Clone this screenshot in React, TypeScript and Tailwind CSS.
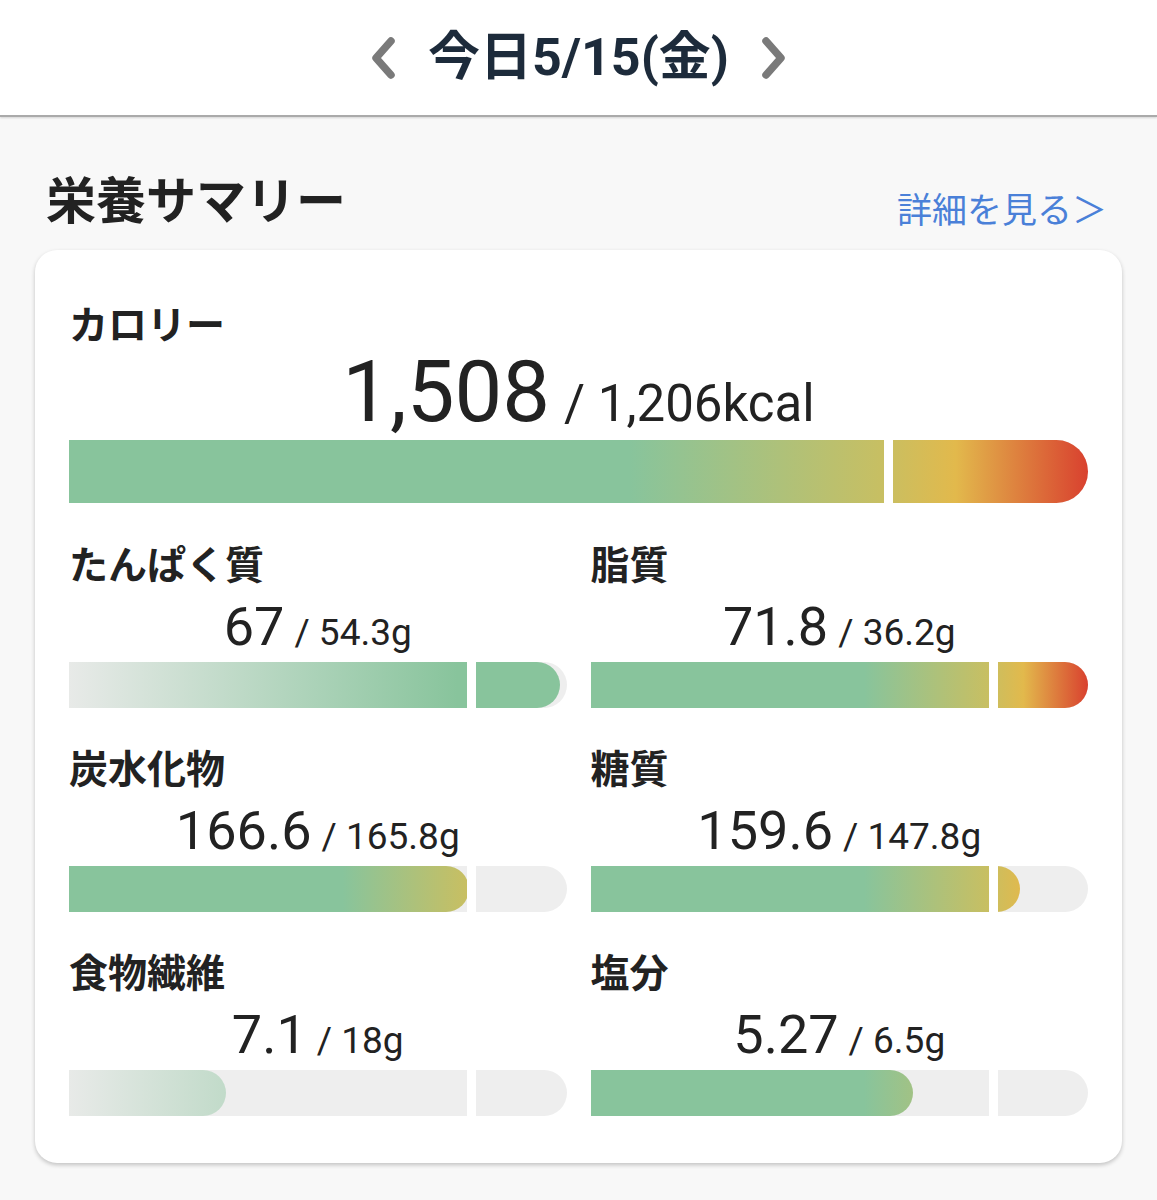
import React from "react";

const BAD =
  "linear-gradient(to right, #88c49c 0%, #88c49c 55%, #c8bf62 80%, #e2b94c 87%, #d9412f 100%)";
const GOOD = "linear-gradient(to right, #e8eae8 0%, #88c49c 78%, #88c49c 100%)";

const NUM = { fontFamily: "Roboto, 'Noto Sans CJK JP', sans-serif" };
const JP = { fontFamily: "'Noto Sans CJK JP', 'Noto Sans', sans-serif" };

function Bar({ value, target, good, big }: { value: number; target: number; good?: boolean; big?: boolean }) {
  const pct = Math.min((value / target) * 0.8, 1) * 100;
  return (
    <div className={`relative w-full rounded-r-full bg-[#eeeeee] ${big ? "h-[63px]" : "h-[46px]"}`}>
      <div
        className="absolute left-0 top-0 bottom-0 rounded-r-full"
        style={{
          width: pct + "%",
          backgroundImage: good ? GOOD : BAD,
          backgroundSize: `${10000 / pct}% 100%`,
          backgroundRepeat: "no-repeat",
        }}
      />
      <div className="absolute top-0 bottom-0 left-[80%] w-[9px] bg-white" />
    </div>
  );
}

function Nutrient({ label, value, target, unit, good }: { label: string; value: string; target: string; unit: string; good?: boolean }) {
  return (
    <div className="flex flex-col">
      <div className="text-[39px] leading-[44px] font-bold text-[#222]" style={JP}>
        {label}
      </div>
      <div className="mt-[16px] flex justify-center items-baseline text-[#222]" style={NUM}>
        <span className="text-[54px] leading-none">{value}</span>
        <span className="ml-[10px] text-[37px] leading-none">/ {target}{unit}</span>
      </div>
      <div className="mt-[8px]">
        <Bar value={parseFloat(value)} target={parseFloat(target)} good={good} />
      </div>
    </div>
  );
}

function Chevron({ dir }: { dir: "l" | "r" }) {
  return (
    <svg width="30" height="46" viewBox="0 0 30 46" fill="none">
      <polyline
        points={dir === "l" ? "23,6 8,23 23,40" : "7,6 22,23 7,40"}
        stroke="#7a7a7a"
        strokeWidth="7.5"
        strokeLinecap="round"
        strokeLinejoin="round"
      />
    </svg>
  );
}

export default function App() {
  return (
    <div className="min-h-screen bg-[#f8f8f8]" style={JP}>
      <header className="h-[117px] bg-white border-b-2 border-[#aaaaaa] shadow-[0_1px_2px_rgba(0,0,0,0.15)] flex items-center justify-center gap-[30px]">
        <Chevron dir="l" />
        <div className="text-[52px] font-bold text-[#1d2b3b] leading-none" style={NUM}>
          今日5/15(金)
        </div>
        <Chevron dir="r" />
      </header>

      <div className="h-[133px] flex justify-between pl-[46px] pr-[50px]">
        <div className="mt-[52px] text-[50px] leading-[56px] font-semibold text-[#222]">栄養サマリー</div>
        <div className="mt-[69px] text-[35px] leading-[44px] text-[#4a80d8]">詳細を見る＞</div>
      </div>

      <div className="mx-[35px] bg-white rounded-[22px] shadow-[0_2px_4px_rgba(0,0,0,0.22)] px-[34px] pt-[50px] pb-[47px]">
        <div className="text-[39px] leading-[44px] font-bold text-[#222]">カロリー</div>
        <div className="mt-[6px] flex justify-center items-baseline text-[#222]" style={NUM}>
          <span className="text-[85px] leading-none">1,508</span>
          <span className="ml-[14px] text-[51px] leading-none">/ 1,206kcal</span>
        </div>
        <div className="mt-[5px]">
          <Bar value={1508} target={1206} big />
        </div>

        <div className="mt-[37px] grid grid-cols-2 gap-x-[24px] gap-y-[36px]">
          <Nutrient label="たんぱく質" value="67" target="54.3" unit="g" good />
          <Nutrient label="脂質" value="71.8" target="36.2" unit="g" />
          <Nutrient label="炭水化物" value="166.6" target="165.8" unit="g" />
          <Nutrient label="糖質" value="159.6" target="147.8" unit="g" />
          <Nutrient label="食物繊維" value="7.1" target="18" unit="g" good />
          <Nutrient label="塩分" value="5.27" target="6.5" unit="g" />
        </div>
      </div>
    </div>
  );
}
